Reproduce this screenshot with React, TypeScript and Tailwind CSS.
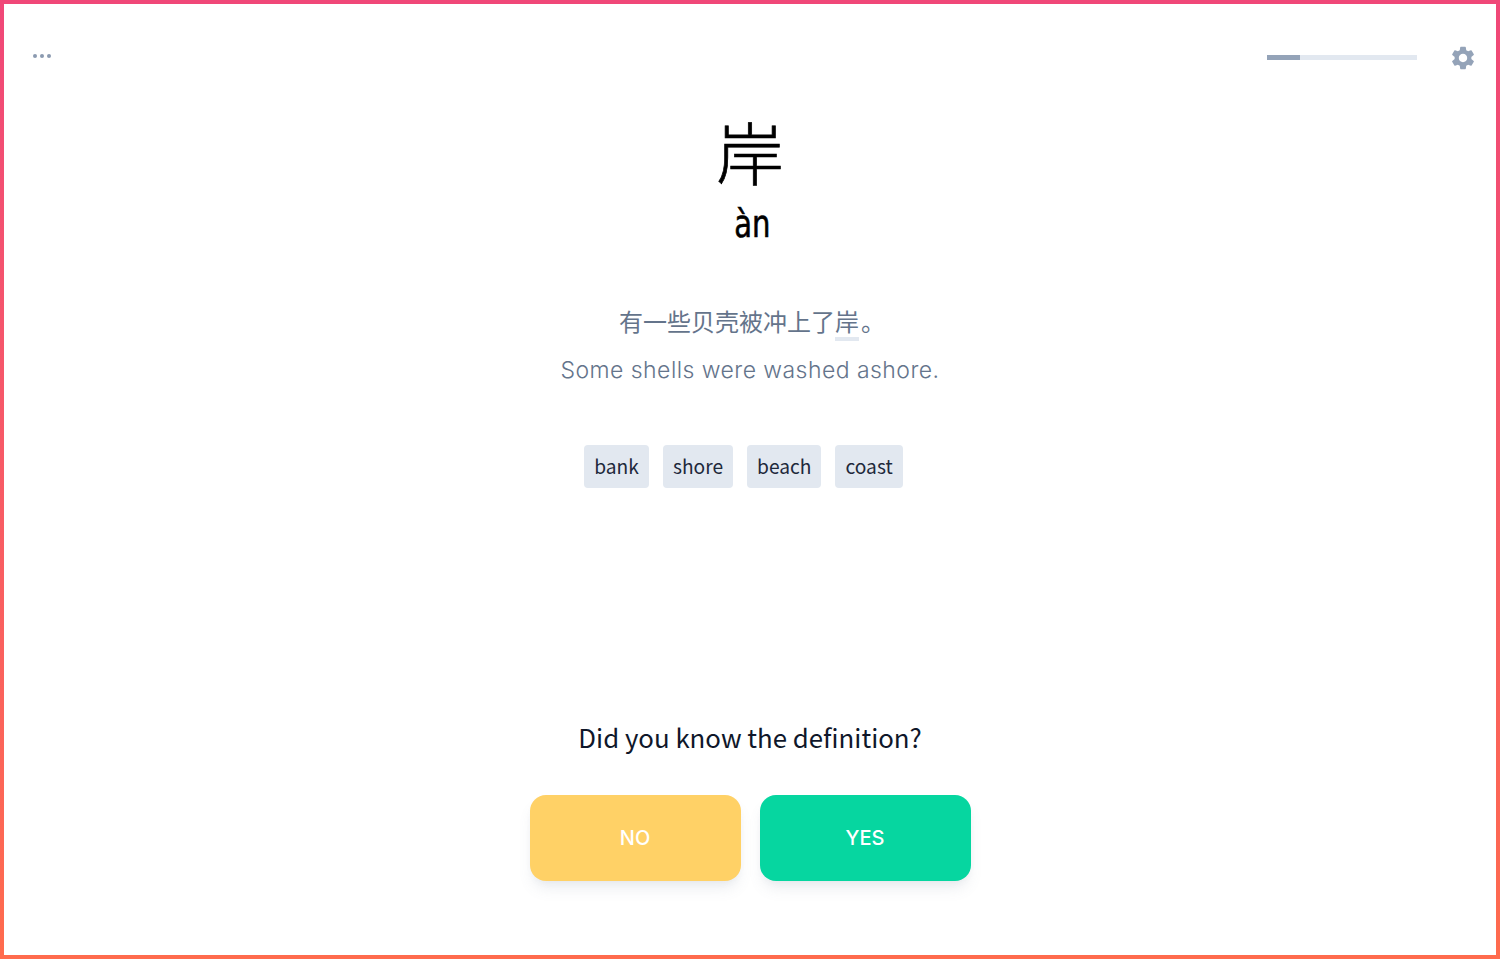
import { MdSettings } from "react-icons/md";

const cjk = "font-['Noto_Sans_CJK_SC',sans-serif]";

export default function App() {
  return (
    <div className="h-[959px] w-[1500px] overflow-hidden bg-gradient-to-b from-[#f04778] to-[#ff6b4d] p-1">
      <div className="flex h-[951px] flex-col items-center bg-white font-['Inter',sans-serif]">
        <div className="flex h-[65px] w-full items-start justify-between pl-[29px] pr-[20px] pt-[42px]">
          <div className="mt-[8px] flex gap-[3px]">
            <span className="h-1 w-1 rounded-full bg-[#8b9ab0]" />
            <span className="h-1 w-1 rounded-full bg-[#8b9ab0]" />
            <span className="h-1 w-1 rounded-full bg-[#8b9ab0]" />
          </div>
          <div className="flex items-start">
            <div className="mt-[9px] mr-[32px] h-[5px] w-[150px] bg-[#e2e8f0]">
              <div className="h-full w-[33px] bg-[#94a3b8]" />
            </div>
            <MdSettings className="-mr-[1px] -mt-[2px] h-[28px] w-[28px] text-[#94a3b8]" />
          </div>
        </div>
        <div className={`mt-[42px] h-[80px] text-center text-[68px] leading-[80px] font-light text-black [-webkit-text-stroke:0.7px_#000] ${cjk}`}>岸</div>
        <div className="mt-[13px] ml-[4px] flex h-[40px] items-center text-[38px] leading-[40px] text-black [-webkit-text-stroke:0.6px_#000] font-['DejaVu_Sans_Condensed','DejaVu_Sans',sans-serif]">
          <span className="inline-block origin-center scale-x-[0.85]">àn</span>
        </div>
        <div className={`mt-[59px] ml-[4px] h-[36px] text-[24px] leading-[36px] text-[#64748b] ${cjk}`}>
          有一些贝壳被冲上了<span className="mr-[2px] inline-block border-b-[4px] border-[#e2e8f0] leading-[32px]">岸</span>。
        </div>
        <div className="mt-[13px] h-[36px] text-[23px] leading-[36px] font-light tracking-[0.45px] text-[#64748b]">
          Some shells were washed ashore.
        </div>
        <div className={`mt-[57px] -ml-[13px] flex gap-[14px] text-[19.2px] leading-[28px] text-[#1e293b] ${cjk}`}>
          {["bank", "shore", "beach", "coast"].map((w) => (
            <div key={w} className="flex h-[43px] items-center rounded-[4px] bg-[#e2e8f0] px-[10px] pb-[2px]">
              {w}
            </div>
          ))}
        </div>
        <div className={`mt-[229px] h-[40px] text-[25.8px] leading-[40px] text-[#0f172a] ${cjk}`}>Did you know the definition?</div>
        <div className="mt-[38px] flex gap-[19px]">
          <button className="h-[86px] w-[211px] rounded-[16px] bg-[#ffd166] text-[20px] font-medium text-white shadow-[0_10px_15px_-3px_rgba(100,116,139,0.12),0_4px_6px_-2px_rgba(100,116,139,0.06)]">NO</button>
          <button className="h-[86px] w-[211px] rounded-[16px] bg-[#06d6a0] text-[20px] font-medium text-white shadow-[0_10px_15px_-3px_rgba(100,116,139,0.12),0_4px_6px_-2px_rgba(100,116,139,0.06)]">YES</button>
        </div>
      </div>
    </div>
  );
}
